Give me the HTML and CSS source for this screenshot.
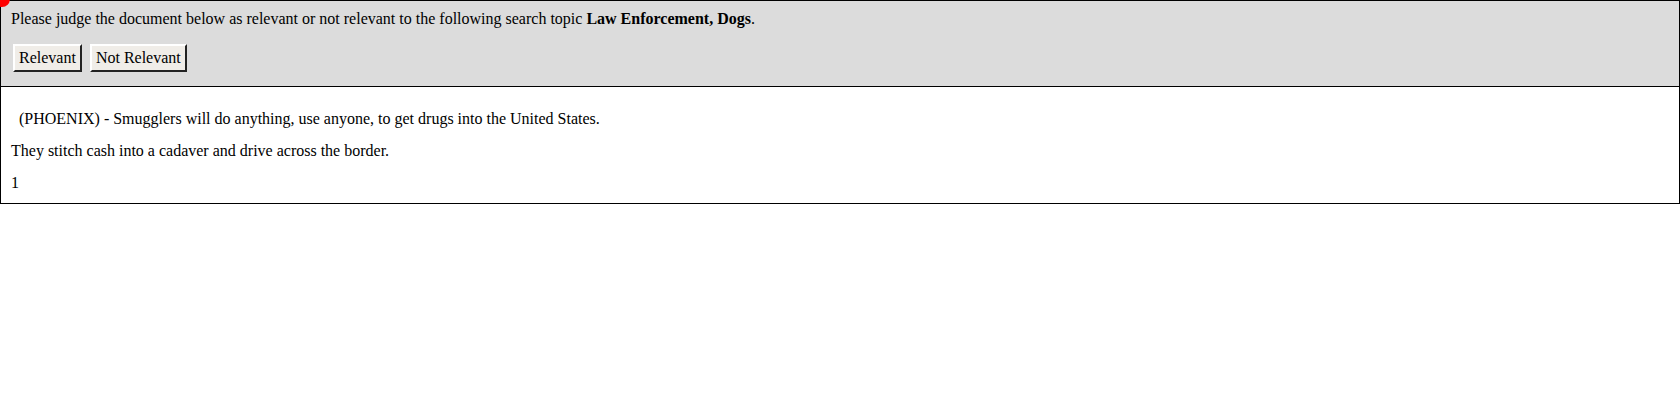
FILE: index.html
```html
<!DOCTYPE html>
<html>
<head>
<meta charset="utf-8">
<link rel="stylesheet" href="styles.css">
</head>
<body>
<div class="dot"></div>
<div class="judge">
  <div class="prompt">Please judge the document below as relevant or not relevant to the following search topic <b>Law Enforcement, Dogs</b>.</div>
  <div class="buttons">
    <button class="btn">Relevant</button>
    <button class="btn">Not Relevant</button>
  </div>
</div>
<div class="doc">
  <p class="first">&nbsp; (PHOENIX) - Smugglers will do anything, use anyone, to get drugs into the United States.</p>
  <p>They stitch cash into a cadaver and drive across the border.</p>
  <p>1</p>
</div>
</body>
</html>
```
FILE: styles.css
```css
html, body {
  margin: 0;
  padding: 0;
  background: #fff;
}
body {
  font-family: "Liberation Serif", "Times New Roman", serif;
  font-size: 16px;
  color: #000;
  position: relative;
}
.dot {
  position: absolute;
  left: -6px;
  top: -9px;
  width: 16px;
  height: 16px;
  border-radius: 50%;
  background: #ff0000;
  z-index: 2;
}
.judge {
  background: #dcdcdc;
  border: 1px solid #000;
  height: 85px;
  padding: 0 10px;
}
.prompt {
  line-height: 18px;
  padding-top: 9px;
}
.buttons {
  display: flex;
  gap: 8px;
  margin-top: 16px;
  padding-left: 2px;
}
.btn {
  font-family: "Liberation Serif", "Times New Roman", serif;
  font-size: 16px;
  color: #000;
  background: #f0ede8;
  border: 2px outset #c8c5c0;
  border-top-color: #ffffff;
  border-left-color: #ffffff;
  border-right-color: #777;
  border-bottom-color: #777;
  padding: 3px 4px 4px;
  height: 28px;
  line-height: 18px;
  border-radius: 0;
}
.doc {
  border: 1px solid #000;
  border-top: none;
  height: 117px;
  padding: 0 10px;
  box-sizing: border-box;
}
.doc p {
  margin: 0;
  line-height: 18px;
  padding-top: 14px;
}
.doc p.first {
  padding-top: 23px;
}
```
